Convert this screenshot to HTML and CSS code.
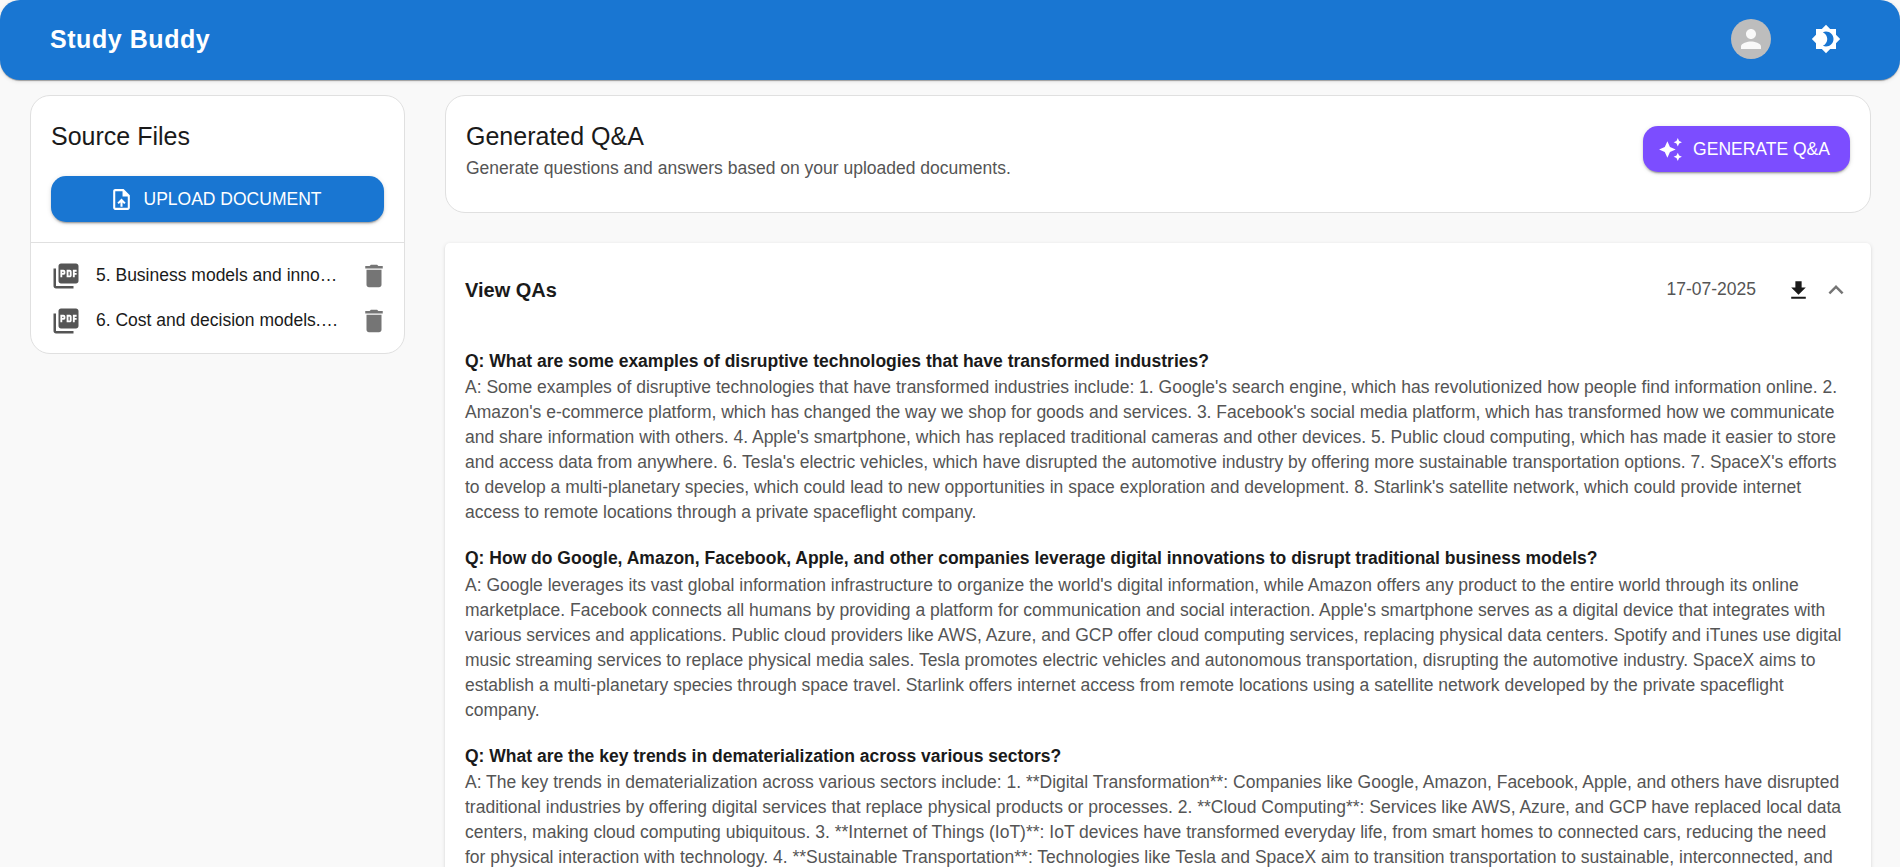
FILE: index.html
```html
<!DOCTYPE html>
<html lang="en">
<head>
<meta charset="utf-8">
<title>Study Buddy</title>
<link rel="stylesheet" href="styles.css">
</head>
<body>
<header class="appbar">
  <h1 class="brand">Study Buddy</h1>
  <div class="appbar-actions">
    <span class="avatar"><svg class="icon-lg" viewBox="0 0 24 24"><path d="M12 12c2.21 0 4-1.79 4-4s-1.79-4-4-4-4 1.79-4 4 1.79 4 4 4m0 2c-2.67 0-8 1.34-8 4v2h16v-2c0-2.66-5.33-4-8-4"/></svg></span>
    <svg class="icon-lg" viewBox="0 0 24 24"><path d="M20 8.69V4h-4.69L12 .69 8.69 4H4v4.69L.69 12 4 15.31V20h4.69L12 23.31 15.31 20H20v-4.69L23.31 12 20 8.69zM12 18c-.89 0-1.74-.2-2.5-.55C11.56 16.5 13 14.42 13 12s-1.44-4.5-3.5-5.45C10.26 6.2 11.11 6 12 6c3.31 0 6 2.69 6 6s-2.69 6-6 6z"/></svg>
  </div>
</header>
<main class="layout">
  <aside class="card sources">
    <div class="sources-head">
      <h2 class="title">Source Files</h2>
      <button class="btn btn-upload"><svg class="icon" viewBox="0 0 24 24"><path d="M14 2H6c-1.1 0-1.99.9-1.99 2L4 20c0 1.1.89 2 1.99 2H18c1.1 0 2-.9 2-2V8l-6-6zm4 18H6V4h7v5h5v11zM8 15.01l1.41 1.41L11 14.84V19h2v-4.16l1.59 1.59L16 15.01 12.01 11 8 15.01z"/></svg>UPLOAD DOCUMENT</button>
    </div>
    <ul class="files">
      <li class="file">
        <svg class="icon-lg file-type" viewBox="0 0 24 24"><path d="M20 2H8c-1.1 0-2 .9-2 2v12c0 1.100.9 2 2 2h12c1.100 0 2-.9 2-2V4c0-1.100-.9-2-2-2zm-8.500 7.500c0 .83-.67 1.500-1.500 1.500H9v2H7.500V7H10c.83 0 1.500.67 1.500 1.500v1zm5 2c0 .83-.67 1.500-1.500 1.500h-2.500V7H15c.83 0 1.500.67 1.500 1.500v3zm4-3H19v1h1.500V11H19v2h-1.500V7h3v1.500zM9 9.500h1v-1H9v1zM4 6H2v14c0 1.100.9 2 2 2h14v-2H4V6zm10 5.500h1v-3h-1v3z"/></svg>
        <span class="file-name">5. Business models and innovation.pdf</span>
        <svg class="icon-lg file-delete" viewBox="0 0 24 24"><path d="M6 19c0 1.1.9 2 2 2h8c1.1 0 2-.9 2-2V7H6v12zM19 4h-3.5l-1-1h-5l-1 1H5v2h14V4z"/></svg>
      </li>
      <li class="file">
        <svg class="icon-lg file-type" viewBox="0 0 24 24"><path d="M20 2H8c-1.1 0-2 .9-2 2v12c0 1.100.9 2 2 2h12c1.100 0 2-.9 2-2V4c0-1.100-.9-2-2-2zm-8.500 7.500c0 .83-.67 1.500-1.500 1.500H9v2H7.500V7H10c.83 0 1.500.67 1.500 1.500v1zm5 2c0 .83-.67 1.500-1.500 1.500h-2.500V7H15c.83 0 1.500.67 1.500 1.500v3zm4-3H19v1h1.500V11H19v2h-1.500V7h3v1.500zM9 9.500h1v-1H9v1zM4 6H2v14c0 1.100.9 2 2 2h14v-2H4V6zm10 5.500h1v-3h-1v3z"/></svg>
        <span class="file-name">6. Cost and decision models.pdf.pdf</span>
        <svg class="icon-lg file-delete" viewBox="0 0 24 24"><path d="M6 19c0 1.1.9 2 2 2h8c1.1 0 2-.9 2-2V7H6v12zM19 4h-3.5l-1-1h-5l-1 1H5v2h14V4z"/></svg>
      </li>
    </ul>
  </aside>
  <section class="content">
    <div class="card intro">
      <div>
        <h2 class="title">Generated Q&amp;A</h2>
        <p class="subtitle">Generate questions and answers based on your uploaded documents.</p>
      </div>
      <button class="btn btn-generate"><svg class="icon" viewBox="0 0 24 24"><path d="m19 9 1.25-2.75L23 5l-2.750-1.250L19 1l-1.250 2.750L15 5l2.750 1.250zm0 6-1.250 2.750L15 19l2.750 1.250L19 23l1.250-2.750L23 19l-2.750-1.250zm-7.500-5.500L9 4 6.500 9.500 1 12l5.500 2.500L9 20l2.500-5.500L17 12z"/></svg>GENERATE Q&amp;A</button>
    </div>
    <article class="accordion">
      <div class="accordion-head">
        <h3 class="accordion-title">View QAs</h3>
        <span class="date">17-07-2025</span>
        <svg class="icon download" viewBox="0 0 24 24"><path d="M5 20h14v-2H5v2zM19 9h-4V3H9v6H5l7 7 7-7z"/></svg>
        <svg class="icon-lg chevron" viewBox="0 0 24 24"><path d="M12 8l-6 6 1.410 1.410L12 10.830l4.590 4.580L18 14z"/></svg>
      </div>
      <div class="qa-list">
        <div class="qa">
          <h4 class="question">Q: What are some examples of disruptive technologies that have transformed industries?</h4>
          <p class="answer">A: Some examples of disruptive technologies that have transformed industries include: 1. Google's search engine, which has revolutionized how people find information online. 2. Amazon's e-commerce platform, which has changed the way we shop for goods and services. 3. Facebook's social media platform, which has transformed how we communicate and share information with others. 4. Apple's smartphone, which has replaced traditional cameras and other devices. 5. Public cloud computing, which has made it easier to store and access data from anywhere. 6. Tesla's electric vehicles, which have disrupted the automotive industry by offering more sustainable transportation options. 7. SpaceX's efforts to develop a multi-planetary species, which could lead to new opportunities in space exploration and development. 8. Starlink's satellite network, which could provide internet access to remote locations through a private spaceflight company.</p>
        </div>
        <div class="qa">
          <h4 class="question">Q: How do Google, Amazon, Facebook, Apple, and other companies leverage digital innovations to disrupt traditional business models?</h4>
          <p class="answer">A: Google leverages its vast global information infrastructure to organize the world's digital information, while Amazon offers any product to the entire world through its online marketplace. Facebook connects all humans by providing a platform for communication and social interaction. Apple's smartphone serves as a digital device that integrates with various services and applications. Public cloud providers like AWS, Azure, and GCP offer cloud computing services, replacing physical data centers. Spotify and iTunes use digital music streaming services to replace physical media sales. Tesla promotes electric vehicles and autonomous transportation, disrupting the automotive industry. SpaceX aims to establish a multi-planetary species through space travel. Starlink offers internet access from remote locations using a satellite network developed by the private spaceflight company.</p>
        </div>
        <div class="qa">
          <h4 class="question">Q: What are the key trends in dematerialization across various sectors?</h4>
          <p class="answer">A: The key trends in dematerialization across various sectors include: 1. **Digital Transformation**: Companies like Google, Amazon, Facebook, Apple, and others have disrupted traditional industries by offering digital services that replace physical products or processes. 2. **Cloud Computing**: Services like AWS, Azure, and GCP have replaced local data centers, making cloud computing ubiquitous. 3. **Internet of Things (IoT)**: IoT devices have transformed everyday life, from smart homes to connected cars, reducing the need for physical interaction with technology. 4. **Sustainable Transportation**: Technologies like Tesla and SpaceX aim to transition transportation to sustainable, interconnected, and</p>
        </div>
      </div>
    </article>
  </section>
</main>
</body>
</html>
```

FILE: styles.css
```css
* {
  box-sizing: border-box;
  margin: 0;
  padding: 0;
}

body {
  height: 867px;
  overflow: hidden;
  background: #f9f9f9;
  color: #1a1a1a;
  font-family: "Liberation Sans", Arial, sans-serif;
  font-size: 17.5px;
}

svg {
  display: block;
  flex: none;
  fill: currentColor;
}

.icon {
  width: 25px;
  height: 25px;
}

.icon-lg {
  width: 30px;
  height: 30px;
}

.appbar {
  display: flex;
  align-items: center;
  justify-content: space-between;
  height: 80px;
  padding: 0 59px 2px 50px;
  border-radius: 20px;
  background: #1976d2;
  color: #fff;
  box-shadow: 0 2px 1px -1px rgba(0, 0, 0, 0.2), 0 1px 1px rgba(0, 0, 0, 0.14), 0 1px 4px rgba(0, 0, 0, 0.12);
}

.brand {
  font-size: 25px;
  line-height: 40px;
  letter-spacing: 0.56px;
}

.appbar-actions {
  display: flex;
  align-items: center;
  gap: 40px;
}

.avatar {
  display: grid;
  place-items: center;
  width: 40px;
  height: 40px;
  border-radius: 50%;
  background: #bdbdbd;
  color: #f9f9f9;
}

.layout {
  display: grid;
  grid-template-columns: 375px 1426px;
  align-items: start;
  gap: 40px;
  padding: 15px 0 0 30px;
}

.card {
  border: 1px solid #e0e0e0;
  border-radius: 20px;
  background: #fff;
}

.title {
  font-size: 25px;
  font-weight: 400;
  line-height: 40px;
}

.sources-head {
  padding: 20px;
  border-bottom: 1px solid #e0e0e0;
}

.btn {
  display: flex;
  align-items: center;
  justify-content: center;
  height: 46px;
  border: 0;
  border-radius: 15px;
  color: #fff;
  font: inherit;
  box-shadow: 0 3px 1px -2px rgba(0, 0, 0, 0.2), 0 2px 2px rgba(0, 0, 0, 0.14), 0 1px 5px rgba(0, 0, 0, 0.12);
}

.btn .icon {
  margin: 0 10px 0 -5px;
}

.btn-upload {
  width: 100%;
  margin-top: 20px;
  background: #1976d2;
}

.files {
  padding: 10px 15px 10px 20px;
  list-style: none;
}

.file {
  display: flex;
  align-items: center;
  height: 45px;
}

.file-type {
  margin-right: 15px;
  color: #555;
}

.file-name {
  flex: 1;
  overflow: hidden;
  margin-right: 20px;
  line-height: 25px;
  text-overflow: ellipsis;
  white-space: nowrap;
}

.file-delete {
  color: #757575;
}

.intro {
  display: flex;
  align-items: flex-start;
  justify-content: space-between;
  height: 118px;
  padding: 20px;
}

.subtitle {
  color: #555;
  line-height: 25px;
}

.btn-generate {
  width: 207px;
  margin-top: 10px;
  background: #7c4dff;
}

.accordion {
  margin-top: 30px;
  border-radius: 5px 5px 0 0;
  background: #fff;
  box-shadow: 0 2px 1px -1px rgba(0, 0, 0, 0.2), 0 1px 1px rgba(0, 0, 0, 0.14), 0 1px 4px rgba(0, 0, 0, 0.12);
}

.accordion-head {
  display: flex;
  align-items: center;
  height: 94px;
  padding: 0 20px;
}

.accordion-title {
  flex: 1;
  font-size: 20px;
  line-height: 35px;
}

.date {
  margin-right: 30px;
  padding-bottom: 2px;
  color: #555;
  line-height: 25px;
}

.download {
  margin-right: 10px;
}

.chevron {
  color: #757575;
}

.qa-list {
  padding: 10.5px 20px 0;
}

.qa {
  margin-bottom: 20px;
}

.question {
  font-size: 17.5px;
  line-height: 27.5px;
}

.answer {
  color: #555;
  line-height: 25.025px;
}
```
